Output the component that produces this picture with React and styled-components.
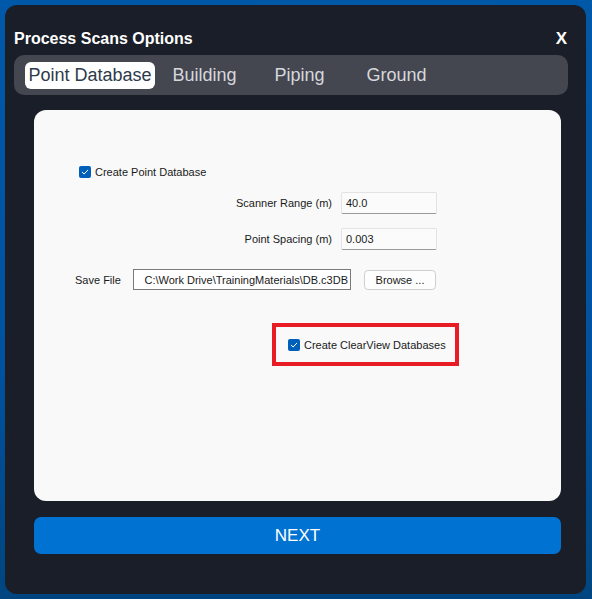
import React from 'react'
import styled, { createGlobalStyle } from 'styled-components'

const Global = createGlobalStyle`
html, body {
  margin: 0;
  padding: 0;
  height: 100%;
}
body {
  background: linear-gradient(180deg, #0058a9 0%, #0052a0 60%, #00457f 100%);
  font-family: "Liberation Sans", Arial, sans-serif;
}
#root {
  height: 100%;
}
`

const tabs = [
    { label: 'Point Database', width: 130, active: true },
    { label: 'Building', width: 99 },
    { label: 'Piping', width: 91 },
    { label: 'Ground', width: 103 },
]

function Check() {
    return (
        <CheckBox>
            <svg width="12" height="12" viewBox="0 0 12 12">
                <path d="M3.2 6.2 L5.1 8 L8.8 4.2" fill="none" stroke="#ffffff" strokeWidth="1" strokeLinecap="round" strokeLinejoin="round" />
            </svg>
        </CheckBox>
    )
}

export default function App() {
    return (
        <>
            <Global />
            <Page>
                <Panel>
                    <Header>
                        <Title>Process Scans Options</Title>
                        <Close>X</Close>
                    </Header>
                    <TabBar>
                        {tabs.map(t => (
                            <Tab key={t.label} w={t.width} active={t.active}>{t.label}</Tab>
                        ))}
                    </TabBar>
                    <Card>
                        <CheckRow>
                            <Check />
                            <span>Create Point Database</span>
                        </CheckRow>
                        <FieldRow gap={13}>
                            <FieldLabel>Scanner Range (m)</FieldLabel>
                            <TextBox>40.0</TextBox>
                        </FieldRow>
                        <FieldRow gap={14}>
                            <FieldLabel>Point Spacing (m)</FieldLabel>
                            <TextBox>0.003</TextBox>
                        </FieldRow>
                        <FileRow>
                            <SaveLabel>Save File</SaveLabel>
                            <PathBox>C:\Work Drive\TrainingMaterials\DB.c3DB</PathBox>
                            <Browse>Browse ...</Browse>
                        </FileRow>
                        <Highlight>
                            <Check />
                            <span>Create ClearView Databases</span>
                        </Highlight>
                    </Card>
                    <NextButton>NEXT</NextButton>
                </Panel>
            </Page>
        </>
    )
}

const Page = styled.div`
height: 100%;
padding: 5px 6px 5px 5px;
box-sizing: border-box;
display: flex;
`

const Panel = styled.div`
flex: 1;
background: #1a1e28;
border-radius: 12px;
display: flex;
flex-direction: column;
padding: 0 18px 0 9px;
`

const Header = styled.div`
display: flex;
justify-content: space-between;
align-items: center;
height: 40px;
padding-top: 14px;
margin-bottom: -4px;
color: #ffffff;
`

const Title = styled.div`
font-size: 16px;
font-weight: bold;
`

const Close = styled.div`
font-size: 17px;
font-weight: bold;
margin-right: 1px;
`

const TabBar = styled.div`
display: flex;
height: 40px;
box-sizing: border-box;
padding: 7px 11px 6px;
background: #44474f;
border-radius: 10px;
`

const Tab = styled.div`
width: ${p => p.w}px;
display: flex;
align-items: center;
justify-content: center;
font-size: 18px;
border-radius: 6px;
color: ${p => p.active ? '#2d3a4a' : '#d6d8de'};
background: ${p => p.active ? '#ffffff' : 'transparent'};
`

const Card = styled.div`
margin: 15px 7px 0 20px;
height: 391px;
background: #f9f9f9;
border-radius: 12px;
font-size: 11px;
color: #1a1a1a;
padding-top: 55px;
box-sizing: border-box;
`

const CheckRow = styled.div`
display: flex;
align-items: center;
gap: 4px;
margin-left: 45px;
height: 14px;
`

const CheckBox = styled.div`
width: 12px;
height: 12px;
border-radius: 2px;
background: #005fb8;
display: flex;
`

const FieldRow = styled.div`
display: flex;
align-items: center;
margin-top: ${p => p.gap}px;
`

const FieldLabel = styled.div`
width: 298px;
text-align: right;
padding-right: 9px;
`

const TextBox = styled.div`
width: 96px;
height: 22px;
box-sizing: border-box;
background: #fbfbfb;
border: 1px solid #e3e3e3;
border-bottom-color: #9a9a9a;
border-radius: 2px;
padding: 0 4px;
display: flex;
align-items: center;
`

const FileRow = styled.div`
display: flex;
align-items: center;
margin-top: 19px;
`

const SaveLabel = styled.div`
width: 58px;
padding-left: 41px;
`

const PathBox = styled.div`
width: 218px;
height: 21px;
box-sizing: border-box;
border: 1px solid #7a7a7a;
background: #ffffff;
display: flex;
align-items: center;
justify-content: flex-end;
padding-right: 2px;
overflow: hidden;
white-space: nowrap;
`

const Browse = styled.div`
margin-left: 13px;
width: 72px;
height: 20px;
box-sizing: border-box;
border: 1px solid #d0d0d0;
border-radius: 4px;
background: #fdfdfd;
display: flex;
align-items: center;
justify-content: center;
`

const Highlight = styled.div`
margin: 33px 0 0 238px;
width: 187px;
height: 43px;
box-sizing: border-box;
border: 4px solid #e81c24;
display: flex;
align-items: center;
gap: 4px;
padding-left: 12px;
`

const NextButton = styled.div`
margin: 16px 7px 0 20px;
height: 37px;
background: #0072d2;
border-radius: 7px;
color: #ffffff;
font-size: 17px;
display: flex;
align-items: center;
justify-content: center;
`
